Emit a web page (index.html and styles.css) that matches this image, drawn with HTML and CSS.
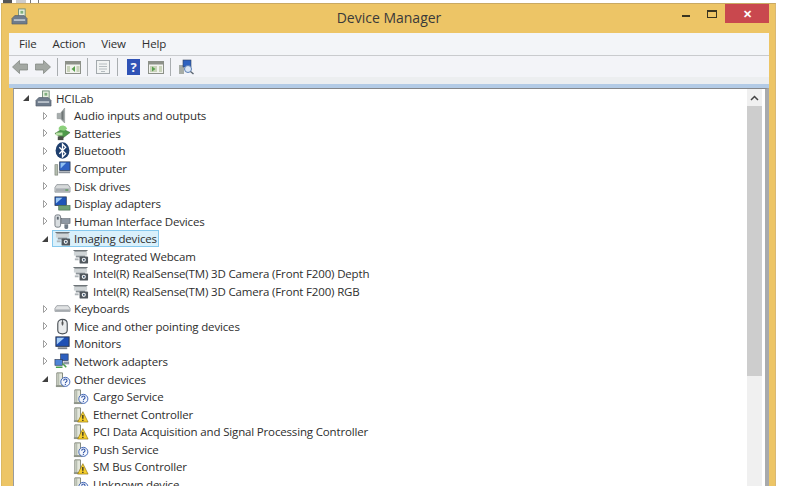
FILE: index.html
```html
<!DOCTYPE html>
<html lang="en">
<head>
  <meta charset="UTF-8">
  <title>Device Manager</title>
  <link rel="stylesheet" href="styles.css">
</head>
<body>
  <!-- Icon set -->
  <svg class="defs" width="0" height="0">
    <defs>
      <symbol id="c-closed" viewBox="0 0 6 10">
        <path d="M1.500 1.500l3.500 3.500-3.500 3.500z" fill="#fff" stroke="#a0a0a0"/>
      </symbol>
      <symbol id="c-open" viewBox="0 0 6 10">
        <path d="M0 8h6V2z" fill="#404040"/>
      </symbol>
      <symbol id="i-pc" viewBox="0 0 18 18">
        <rect x="8" y="1" width="7" height="8" fill="#e8f0e0" stroke="#6f8f78"/>
        <rect x="10" y="3" width="3" height="3" fill="#7fb07f"/>
        <path d="M5 8h4v3H5z" fill="#9aa3ad"/>
        <path d="M1 11l3-3h10l3 3v6H1z" fill="#6f7c8c" stroke="#4e5763" stroke-width=".6"/>
        <rect x="3" y="12" width="12" height="1.500" fill="#cfd6dd"/>
      </symbol>
      <symbol id="i-audio" viewBox="0 0 16 16">
        <path d="M3 6h3l4-5v14l-4-4H3z" fill="#a8aeae" stroke="#8c9292" stroke-width=".6"/>
        <path d="M7 5l2-2v10l-2-2z" fill="#6f7676"/>
      </symbol>
      <symbol id="i-battery" viewBox="0 0 18 16">
        <path d="M1 8l8-5 8 4-8 6z" fill="#4f9a49" stroke="#3a6b35" stroke-width=".6"/>
        <path d="M5 2a5 5 0 0 1 9 1l-3 2-6-1z" fill="#8cd07c"/>
        <rect x="4" y="11" width="6" height="4" fill="#4a4f47"/>
        <rect x="2" y="7" width="7" height="3" fill="#b9e0a6"/>
      </symbol>
      <symbol id="i-bt" viewBox="0 0 16 16">
        <ellipse cx="8" cy="8" rx="6.500" ry="7.800" fill="#1f3f6e"/>
        <path d="M5 5l6 6-3 3V2l3 3-6 6" fill="none" stroke="#fff" stroke-width="1.200"/>
      </symbol>
      <symbol id="i-computer" viewBox="0 0 18 16">
        <rect x="1" y="4" width="3" height="11" fill="#b5bdb0" stroke="#6f776c" stroke-width=".6"/>
        <rect x="6" y="1" width="11" height="9" fill="#2f62c4" stroke="#26364f" stroke-width=".8"/>
        <path d="M7 2h6l-6 6z" fill="#8fc0f2"/>
        <rect x="5" y="11" width="12" height="2" fill="#8b929b"/>
      </symbol>
      <symbol id="i-disk" viewBox="0 0 18 16">
        <path d="M3 6h12l2 3v5H1V9z" fill="#d6d9da" stroke="#777d82" stroke-width=".7"/>
        <rect x="2" y="10" width="14" height="3.500" fill="#a9aeb2"/>
        <rect x="12" y="11" width="3" height="1.500" fill="#5e9e5e"/>
      </symbol>
      <symbol id="i-display" viewBox="0 0 18 16">
        <rect x="1" y="1" width="12" height="9" fill="#1f55b8" stroke="#27344a" stroke-width=".8"/>
        <path d="M2 2h7l-7 6z" fill="#9cc8f5"/>
        <rect x="5" y="10" width="12" height="5" fill="#6fa073" stroke="#44664a" stroke-width=".6"/>
      </symbol>
      <symbol id="i-hid" viewBox="0 0 18 16">
        <rect x="1" y="1" width="6" height="13" rx="2" fill="#d8dde0" stroke="#555d66" stroke-width=".8"/>
        <rect x="3" y="3" width="2" height="3" fill="#5d6670"/>
        <rect x="8" y="5" width="9" height="5" fill="#8f98a3" stroke="#525a63" stroke-width=".6"/>
        <path d="M11 11h4v3a2 2 0 0 1-4 0z" fill="#6f7a86"/>
      </symbol>
      <symbol id="i-cam" viewBox="0 0 18 16">
        <path d="M1 1h16l-2 2H3z" fill="#6d7478"/>
        <path d="M2 3h14v4H2z" fill="#cfd4d6"/>
        <path d="M4 7h10v2H4z" fill="#8d9499"/>
        <rect x="8" y="8" width="9" height="7.500" rx="1" fill="#4f565c"/>
        <circle cx="12.500" cy="11.500" r="2.200" fill="#f2f4f5"/>
        <circle cx="12.500" cy="11.500" r="1" fill="#39506b"/>
        <rect x="3" y="10" width="4" height="2" fill="#aeb4b8"/>
      </symbol>
      <symbol id="i-keyboard" viewBox="0 0 18 16">
        <path d="M3 5h12l2 3v3H1V8z" fill="#e0e2e3" stroke="#7b8085" stroke-width=".7"/>
        <rect x="1.500" y="9" width="15" height="2" fill="#a5aaae"/>
      </symbol>
      <symbol id="i-mouse" viewBox="0 0 18 18">
        <path d="M4 6c0-6 10-6 10 0v7c0 5-10 5-10 0z" fill="#e9ebec" stroke="#4c5258" stroke-width="1.200"/>
        <path d="M9 2v6" stroke="#565c62"/>
        <rect x="8" y="4" width="2" height="3" fill="#555"/>
      </symbol>
      <symbol id="i-monitor" viewBox="0 0 18 16">
        <rect x="2" y="1" width="14" height="10" fill="#1d4fb5" stroke="#29344a"/>
        <path d="M3 2h8l-8 7z" fill="#a6cdf5"/>
        <rect x="4" y="12" width="10" height="2" fill="#7c838c"/>
      </symbol>
      <symbol id="i-net" viewBox="0 0 18 18">
        <rect x="7" y="1" width="8" height="7" fill="#2d5fbf" stroke="#2a3a58" stroke-width=".7"/>
        <rect x="1" y="7" width="8" height="6" fill="#4f84d6" stroke="#2a3a58" stroke-width=".7"/>
        <path d="M2 15h7M9 11l4 4" stroke="#4aa04a" stroke-width="1.600"/>
        <rect x="10" y="9" width="6" height="3" fill="#8f99a5"/>
      </symbol>
      <symbol id="i-unknown" viewBox="0 0 18 18">
        <path d="M3 2h6v14H3z" fill="#e4e7dc" stroke="#7e8578"/>
        <path d="M5 2v14" stroke="#a7ae9f"/>
        <rect x="2" y="15" width="9" height="2" fill="#8f958a"/>
        <circle cx="12" cy="11.500" r="4.800" fill="#f4f7fd" stroke="#3c62b4"/>
        <path d="M10.300 10.200c0-2.200 3.500-2.200 3.500 0 0 1.300-1.800 1.300-1.800 2.700M12 13.800v1" fill="none" stroke="#2b50a5" stroke-width="1.100"/>
      </symbol>
      <symbol id="i-warn" viewBox="0 0 18 18">
        <path d="M3 2h6v14H3z" fill="#e4e7dc" stroke="#7e8578"/>
        <path d="M5 2v14" stroke="#a7ae9f"/>
        <rect x="2" y="15" width="9" height="2" fill="#8f958a"/>
        <path d="M11.500 6l5.500 11H6z" fill="#f6cf2d" stroke="#8f7410" stroke-width=".7"/>
        <path d="M11.500 9.500v4M11.500 14.500v1.400" stroke="#222" stroke-width="1.300"/>
      </symbol>
    </defs>
  </svg>

  <!-- Bits of the window behind -->
  <div class="behind"><span class="b1"></span><span class="b2"></span><span class="b3"></span><span class="b4"></span></div>

  <div class="window">
    <div class="titlebar">
      <svg class="app-icon"><use href="#i-pc"/></svg>
      <div class="title">Device Manager</div>
      <div class="controls">
        <span class="min"></span>
        <span class="max"></span>
        <span class="close">&#x2715;</span>
      </div>
    </div>

    <div class="menubar">
      <span>File</span><span>Action</span><span>View</span><span>Help</span>
    </div>

    <div class="toolbar">
      <svg class="tool" viewBox="0 0 16 16"><path d="M0.500 8l7-6.500v3.500h8v6h-8v3.500z" fill="#a3a8a3" stroke="#7d827d" stroke-width=".7"/></svg>
      <svg class="tool" viewBox="0 0 16 16"><path d="M15.500 8l-7-6.500v3.500h-8v6h8v3.500z" fill="#a3a8a3" stroke="#7d827d" stroke-width=".7"/></svg>
      <i class="sep"></i>
      <svg class="tool" viewBox="0 0 16 16"><rect x=".5" y="2.500" width="15" height="12" fill="#f2f3ee" stroke="#8d9189"/><rect x="1" y="3" width="14" height="2.500" fill="#8d9189"/><rect x="2" y="7" width="3" height="6" fill="#c9d3ba"/><path d="M10 7v6L6.500 10z" fill="#58a14d"/><rect x="11.500" y="7" width="3" height="6" fill="#c9d3ba"/></svg>
      <i class="sep"></i>
      <svg class="tool" viewBox="0 0 16 16"><rect x="1.500" y="1.500" width="13" height="13" fill="#f1f3f3" stroke="#a3a9ad"/><path d="M4 5h8M4 7.500h8M4 10h8M6 12.500h4" stroke="#b5bcc0"/></svg>
      <i class="sep"></i>
      <span class="help">?</span>
      <svg class="tool" viewBox="0 0 16 16"><rect x=".5" y="2.500" width="15" height="12" fill="#f2f3ee" stroke="#8d9189"/><rect x="1" y="3" width="14" height="2.500" fill="#8d9189"/><rect x="2" y="7" width="7" height="6" fill="#c9d3ba"/><path d="M4 7.500v5L7.500 10z" fill="#58a14d"/><rect x="11" y="7" width="3" height="6" fill="#c9d3ba"/></svg>
      <i class="sep"></i>
      <svg class="tool" viewBox="0 0 16 16"><rect x="1" y="6" width="5" height="9" fill="#a7aca6"/><rect x="5" y="1" width="8" height="7" fill="#2e62c0" stroke="#31415c" stroke-width=".6"/><circle cx="10" cy="10" r="3.500" fill="#d9e5f4" stroke="#5c7fb5"/><path d="M12.500 12.500l3 2.500" stroke="#5b6470" stroke-width="1.400"/></svg>
    </div>
    <div class="toolbar-foot"></div>

    <div class="pane">
      <div class="tree">
        <div class="row root"><svg class="caret"><use href="#c-open"/></svg><svg class="icon"><use href="#i-pc"/></svg><span>HCILab</span></div>

        <div class="row"><svg class="caret"><use href="#c-closed"/></svg><svg class="icon"><use href="#i-audio"/></svg><span>Audio inputs and outputs</span></div>
        <div class="row"><svg class="caret"><use href="#c-closed"/></svg><svg class="icon"><use href="#i-battery"/></svg><span>Batteries</span></div>
        <div class="row"><svg class="caret"><use href="#c-closed"/></svg><svg class="icon"><use href="#i-bt"/></svg><span>Bluetooth</span></div>
        <div class="row"><svg class="caret"><use href="#c-closed"/></svg><svg class="icon"><use href="#i-computer"/></svg><span>Computer</span></div>
        <div class="row"><svg class="caret"><use href="#c-closed"/></svg><svg class="icon"><use href="#i-disk"/></svg><span>Disk drives</span></div>
        <div class="row"><svg class="caret"><use href="#c-closed"/></svg><svg class="icon"><use href="#i-display"/></svg><span>Display adapters</span></div>
        <div class="row"><svg class="caret"><use href="#c-closed"/></svg><svg class="icon"><use href="#i-hid"/></svg><span>Human Interface Devices</span></div>

        <div class="row"><svg class="caret"><use href="#c-open"/></svg><div class="sel"><svg class="icon"><use href="#i-cam"/></svg><span>Imaging devices</span></div></div>
        <div class="row child"><svg class="icon"><use href="#i-cam"/></svg><span>Integrated Webcam</span></div>
        <div class="row child"><svg class="icon"><use href="#i-cam"/></svg><span>Intel(R) RealSense(TM) 3D Camera (Front F200) Depth</span></div>
        <div class="row child"><svg class="icon"><use href="#i-cam"/></svg><span>Intel(R) RealSense(TM) 3D Camera (Front F200) RGB</span></div>

        <div class="row"><svg class="caret"><use href="#c-closed"/></svg><svg class="icon"><use href="#i-keyboard"/></svg><span>Keyboards</span></div>
        <div class="row"><svg class="caret"><use href="#c-closed"/></svg><svg class="icon"><use href="#i-mouse"/></svg><span>Mice and other pointing devices</span></div>
        <div class="row"><svg class="caret"><use href="#c-closed"/></svg><svg class="icon"><use href="#i-monitor"/></svg><span>Monitors</span></div>
        <div class="row"><svg class="caret"><use href="#c-closed"/></svg><svg class="icon"><use href="#i-net"/></svg><span>Network adapters</span></div>

        <div class="row"><svg class="caret"><use href="#c-open"/></svg><svg class="icon"><use href="#i-unknown"/></svg><span>Other devices</span></div>
        <div class="row child"><svg class="icon"><use href="#i-unknown"/></svg><span>Cargo Service</span></div>
        <div class="row child"><svg class="icon"><use href="#i-warn"/></svg><span>Ethernet Controller</span></div>
        <div class="row child"><svg class="icon"><use href="#i-warn"/></svg><span>PCI Data Acquisition and Signal Processing Controller</span></div>
        <div class="row child"><svg class="icon"><use href="#i-unknown"/></svg><span>Push Service</span></div>
        <div class="row child"><svg class="icon"><use href="#i-warn"/></svg><span>SM Bus Controller</span></div>
        <div class="row child"><svg class="icon"><use href="#i-unknown"/></svg><span>Unknown device</span></div>
      </div>

      <div class="scrollbar">
        <div class="scroll-up"><svg viewBox="0 0 9 6" width="9" height="6"><path d="M1 5l3.500-3.500L8 5" fill="none" stroke="#444" stroke-width="1.500"/></svg></div>
        <div class="thumb"></div>
      </div>
    </div>
  </div>
</body>
</html>
```

FILE: styles.css
```css
/* General */
html, body {
  height: 486px;
}

body {
  margin: 0;
  overflow: hidden;
  background: #fff;
  font-family: "Open Sans", "Noto Sans", sans-serif;
  font-size: 11.5px;
  letter-spacing: -0.16px;
  color: #2e2e2e;
}

.defs {
  display: block;
  height: 0;
}

/* Strip above the window */
.behind {
  display: flex;
  height: 3px;
  padding-left: 3px;
}

.behind span {
  display: block;
  height: 3px;
}

.b1 { width: 9px; background: #555; }
.b2 { width: 10px; margin-left: 4px; background: #ccc; }
.b3 { width: 1px; margin-left: 4px; background: #777; }
.b4 { width: 1px; margin-left: 7px; background: #777; }

/* Window frame */
.window {
  width: 775px;
  height: 483px;
  margin-left: 1px;
  box-sizing: border-box;
  padding: 0 6px 0 7px;
  background: #edc566;
  border-top: 1px solid #c9a963;
  border-left: 1px solid #dcb963;
  border-right: 1px solid #d9b874;
  display: flex;
  flex-direction: column;
}

.titlebar {
  height: 29px;
  flex: none;
  display: grid;
  grid-template-columns: 1fr auto 1fr;
  align-items: start;
}

.app-icon {
  width: 17px;
  height: 17px;
  margin: 4px 0 0 2px;
}

.title {
  font-size: 14px;
  letter-spacing: 0;
  line-height: 28px;
  color: #3a3a3a;
}

.controls {
  display: flex;
  justify-content: flex-end;
  align-items: flex-start;
}

.min {
  width: 8px;
  height: 2px;
  margin: 11px 17px 0 0;
  background: #3a3520;
}

.max {
  width: 8px;
  height: 5px;
  margin: 6px 8px 0 0;
  border: 1px solid #3a3520;
  border-top-width: 2px;
}

.close {
  width: 44px;
  height: 19px;
  background: #c9484e;
  color: #fff;
  font-size: 11px;
  font-weight: bold;
  line-height: 19px;
  text-align: center;
}

/* Menu and toolbar */
.menubar {
  height: 22px;
  flex: none;
  display: flex;
  gap: 16px;
  padding-left: 10px;
  background: #f3f5f8;
  border-bottom: 1px solid #c9cbce;
  line-height: 21px;
}

.toolbar {
  height: 28px;
  flex: none;
  display: flex;
  align-items: flex-start;
  padding: 3px 0 0 3px;
  box-sizing: border-box;
  background: linear-gradient(#f3f4f8 21px, #eceef0 21px);
}

.toolbar-foot {
  height: 4px;
  flex: none;
  background: #b3cbe6;
}

.tool {
  width: 16px;
  height: 16px;
  flex: none;
  margin-right: 7px;
}

.sep {
  width: 1px;
  height: 18px;
  flex: none;
  margin: -1px 7px 0 -1px;
  background: #a9adb0;
}

.help {
  width: 13px;
  height: 16px;
  flex: none;
  margin: 0 8px 0 2px;
  background: #2f52b6;
  color: #f2f4fb;
  font-size: 13px;
  font-weight: bold;
  line-height: 16px;
  text-align: center;
}

/* Device tree */
.pane {
  flex: 1;
  min-height: 0;
  display: flex;
  margin-left: 4px;
  background: #fff;
  border-top: 1px solid #85878a;
  border-left: 1px solid #9a9c9e;
  border-right: 4px solid #a8aaac;
}

.tree {
  flex: 1;
  min-width: 0;
  overflow: hidden;
  padding-top: 0.5px;
}

.row {
  height: 17.55px;
  display: flex;
  align-items: center;
  white-space: nowrap;
  padding-left: 28px;
}

.row.root {
  padding-left: 9px;
}

.row.root .icon,
.row.child .icon {
  margin-right: 4px;
}

.row.child {
  padding-left: 58px;
}

.icon {
  width: 17px;
  height: 17px;
  flex: none;
  margin-right: 3px;
}

.caret {
  width: 6px;
  height: 10px;
  flex: none;
  margin-right: 6px;
}

.sel {
  display: flex;
  align-items: center;
  height: 17px;
  margin-left: -2px;
  padding: 0 2px;
  background: #d9f0fb;
  box-shadow: inset 0 0 0 1px #86c9ee;
}

/* Scrollbar */
.scrollbar {
  width: 15px;
  flex: none;
  margin-right: 3px;
  background: #f0f0f0;
}

.scroll-up {
  height: 17px;
  display: flex;
  align-items: center;
  justify-content: center;
}

.thumb {
  height: 270px;
  background: #cdcdcd;
}
```
